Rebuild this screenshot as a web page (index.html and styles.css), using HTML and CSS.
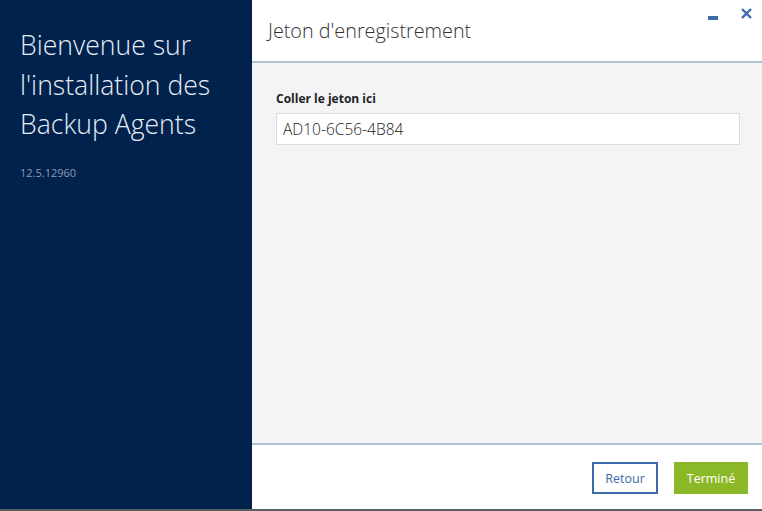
FILE: index.html
```html
<!DOCTYPE html>
<html lang="fr">
<head>
    <meta charset="UTF-8">
    <meta name="viewport" content="width=device-width, initial-scale=1.0">
    <title>Installation des Backup Agents</title>
    <link rel="stylesheet" href="styles.css">
</head>
<body>
    <div class="fenetre">
        <aside class="cote">
            <h1 class="bienvenue">Bienvenue sur l'installation des Backup Agents</h1>
            <p class="version">12.5.12960</p>
        </aside>

        <main class="principal">
            <header class="entete">
                <h2 class="titre">Jeton d'enregistrement</h2>
                <div class="controles">
                    <span class="reduire"></span>
                    <svg class="fermer" width="11" height="11" viewBox="0 0 11 11">
                        <path d="M1 1 L10 10 M10 1 L1 10" stroke="#3d6aa8" stroke-width="2.4" />
                    </svg>
                </div>
            </header>

            <section class="contenu">
                <label class="etiquette" for="jeton">Coller le jeton ici</label>
                <input class="champ" id="jeton" type="text" value="AD10-6C56-4B84">
            </section>

            <footer class="pied">
                <button class="bouton retour" type="button">Retour</button>
                <button class="bouton termine" type="button">Terminé</button>
            </footer>
        </main>
    </div>
</body>
</html>
```

FILE: styles.css
```css
* {
    margin: 0;
    padding: 0;
    box-sizing: border-box;
    outline: none;
    font-family: "Open Sans", "Noto Sans", sans-serif;
}

:root {
    --bleu-fonce: #00224d;
    --bleu: #3d6aa8;
    --vert: #8bb826;
    --gris-fond: #f3f4f6;
    --ligne: #b3c1d6;
}

html, body {
    width: 762px;
    height: 511px;
    overflow: hidden;
}

.fenetre {
    display: flex;
    height: 509px;
    border-bottom: 2px solid #5c5f63;
    box-sizing: content-box;
}

.cote {
    width: 252px;
    background: var(--bleu-fonce);
    padding: 26px 20px 0 20px;
}

.bienvenue {
    font-weight: 300;
    font-size: 26.6px;
    line-height: 39.5px;
    color: #e8edf5;
}

.version {
    margin-top: 20px;
    font-size: 11px;
    color: #8e9bb3;
}

.principal {
    flex: 1;
    display: flex;
    flex-direction: column;
}

.entete {
    height: 63px;
    background: white;
    border-bottom: 2px solid var(--ligne);
    display: flex;
    justify-content: space-between;
    padding: 0 10px 0 16px;
}

.titre {
    font-weight: 300;
    font-size: 19.8px;
    color: #333;
    padding-top: 17px;
}

.controles {
    display: flex;
    gap: 23px;
    padding-top: 8px;
}

.reduire {
    width: 10px;
    height: 4px;
    background: var(--bleu);
    margin-top: 8px;
}

.contenu {
    flex: 1;
    background: var(--gris-fond);
    border-bottom: 2px solid var(--ligne);
    padding: 27px 22px 0 24px;
}

.etiquette {
    display: block;
    font-size: 12px;
    font-weight: 700;
    color: #222;
    margin-bottom: 6px;
}

.champ {
    width: 464px;
    height: 32px;
    border: 1px solid #dcdde0;
    background: white;
    padding: 0 6px;
    font-size: 15.5px;
    font-weight: 300;
    color: #222;
}

.pied {
    height: 64px;
    background: white;
    display: flex;
    justify-content: flex-end;
    align-items: flex-start;
    gap: 16px;
    padding: 17px 14px 0 0;
}

.bouton {
    height: 32px;
    font-size: 12.5px;
    cursor: pointer;
}

.retour {
    width: 66px;
    background: white;
    border: 2px solid var(--bleu);
    color: var(--bleu);
}

.termine {
    width: 74px;
    background: var(--vert);
    border: none;
    color: white;
}
```
